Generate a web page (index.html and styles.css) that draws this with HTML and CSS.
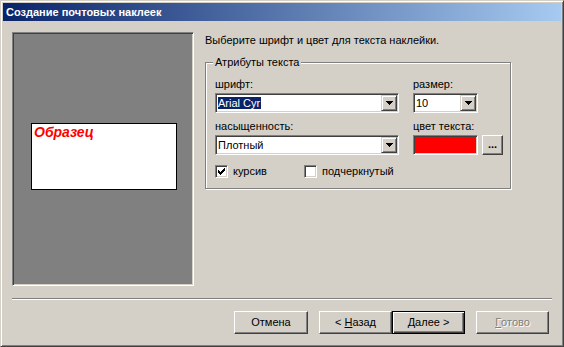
FILE: index.html
```html
<!DOCTYPE html>
<html lang="ru">
  <head>
    <meta charset="UTF-8" />
    <title>Создание почтовых наклеек</title>
    <link rel="stylesheet" href="styles.css">
  </head>
  <body>
    <div class="window">
      <div class="titlebar">Создание почтовых наклеек</div>

      <div class="main">
        <div class="preview">
          <div class="card"><span class="sample">Образец</span></div>
        </div>

        <div class="pane">
          <p class="intro">Выберите шрифт и цвет для текста наклейки.</p>

          <div class="group">
            <span class="legend">Атрибуты текста</span>

            <div class="fields">
              <div class="field">
                <label>шрифт:</label>
                <div class="combo">
                  <span class="value"><span class="selected">Arial Cyr</span></span>
                  <span class="drop"><svg width="7" height="4" viewBox="0 0 7 4"><path d="M0 0h7v1H0zM1 1h5v1H1zM2 2h3v1H2zM3 3h1v1H3z" fill="#000"/></svg></span>
                </div>
              </div>
              <div class="field">
                <label>размер:</label>
                <div class="combo small">
                  <span class="value">10</span>
                  <span class="drop"><svg width="7" height="4" viewBox="0 0 7 4"><path d="M0 0h7v1H0zM1 1h5v1H1zM2 2h3v1H2zM3 3h1v1H3z" fill="#000"/></svg></span>
                </div>
              </div>
              <div class="field">
                <label>насыщенность:</label>
                <div class="combo">
                  <span class="value">Плотный</span>
                  <span class="drop"><svg width="7" height="4" viewBox="0 0 7 4"><path d="M0 0h7v1H0zM1 1h5v1H1zM2 2h3v1H2zM3 3h1v1H3z" fill="#000"/></svg></span>
                </div>
              </div>
              <div class="field">
                <label>цвет текста:</label>
                <div class="color-row">
                  <span class="swatch"></span>
                  <span class="more">...</span>
                </div>
              </div>
            </div>

            <div class="checks">
              <div class="check first">
                <span class="box"><svg width="7" height="7" viewBox="0 0 7 7"><path d="M6 0h1v3H6zM5 1h1v3H5zM4 2h1v3H4zM3 3h1v3H3zM2 4h1v3H2zM1 3h1v3H1zM0 2h1v3H0z" fill="#000"/></svg></span>
                <span>курсив</span>
              </div>
              <div class="check">
                <span class="box"></span>
                <span>подчеркнутый</span>
              </div>
            </div>
          </div>
        </div>
      </div>

      <div class="separator"></div>

      <div class="buttons">
        <div class="btn cancel">Отмена</div>
        <div class="btn back">&lt; <u>Н</u>азад</div>
        <div class="btn default"><u>Д</u>алее &gt;</div>
        <div class="btn disabled finish"><u>Г</u>отово</div>
      </div>
    </div>
  </body>
</html>
```

FILE: styles.css
```css
body {
  margin: 0;
  background: #d4d0c8;
}

.window {
  width: 564px;
  height: 347px;
  box-sizing: border-box;
  background: #d4d0c8;
  border: 1px solid;
  border-color: #d4d0c8 #404040 #404040 #d4d0c8;
  box-shadow: inset 1px 1px #fff, inset -1px -1px #808080;
  padding: 2px;
  font: 11px "Liberation Sans", Arial, sans-serif;
  color: #000;
}

.titlebar {
  height: 18px;
  line-height: 18px;
  padding-left: 3px;
  background: linear-gradient(to right, #0a246a, #a6caf0);
  color: #fff;
  font-weight: bold;
}

.main {
  display: flex;
  align-items: flex-start;
  padding: 11px 0 0 9px;
}

.preview {
  width: 182px;
  height: 254px;
  box-sizing: border-box;
  background: #808080;
  border: 1px solid;
  border-color: #808080 #fff #fff #808080;
  box-shadow: inset 1px 1px #404040, inset -1px -1px #d4d0c8;
  padding: 90px 0 0 18px;
}

.card {
  width: 146px;
  height: 67px;
  box-sizing: border-box;
  background: #fff;
  border: 1px solid #000;
  padding-left: 2px;
}

.sample {
  color: #ff0000;
  font: italic bold 14px/16px "Liberation Sans", Arial, sans-serif;
}

.pane {
  margin-left: 11px;
}

.intro {
  margin: 2px 0 0;
  line-height: 13px;
}

.group {
  position: relative;
  margin-top: 15px;
  width: 306px;
  height: 127px;
  box-sizing: border-box;
  border: 1px solid #808080;
  box-shadow: 1px 1px #fff, inset 1px 1px #fff;
  padding: 15px 0 0 9px;
}

.legend {
  position: absolute;
  top: -7px;
  left: 7px;
  padding: 0 2px;
  line-height: 13px;
  background: #d4d0c8;
}

.fields {
  display: grid;
  grid-template-columns: 184px 90px;
  column-gap: 14px;
  row-gap: 7px;
}

.field label {
  display: block;
  line-height: 13px;
  margin-bottom: 2px;
}

.combo {
  display: flex;
  align-items: center;
  height: 20px;
  box-sizing: border-box;
  background: #fff;
  border: 1px solid;
  border-color: #808080 #fff #fff #808080;
  box-shadow: inset 1px 1px #404040, inset -1px -1px #d4d0c8;
  padding: 1px;
}

.combo.small {
  width: 65px;
}

.combo .value {
  flex: 1;
  padding-left: 1px;
  line-height: 14px;
}

.selected {
  background: #0a246a;
  color: #fff;
  padding: 0 1px 0 0;
}

.drop {
  width: 16px;
  height: 16px;
  box-sizing: border-box;
  display: flex;
  align-items: center;
  justify-content: center;
  background: #d4d0c8;
  border: 1px solid;
  border-color: #d4d0c8 #404040 #404040 #d4d0c8;
  box-shadow: inset 1px 1px #fff, inset -1px -1px #808080;
}

.color-row {
  display: flex;
  gap: 4px;
}

.swatch {
  width: 65px;
  height: 20px;
  box-sizing: border-box;
  background: #ff0000;
  border: 1px solid;
  border-color: #808080 #fff #fff #808080;
  box-shadow: inset 1px 1px #404040, inset -1px -1px #d4d0c8;
}

.more {
  width: 21px;
  height: 20px;
  box-sizing: border-box;
  display: flex;
  align-items: center;
  justify-content: center;
  font-weight: bold;
  line-height: 10px;
  padding-bottom: 3px;
  background: #d4d0c8;
  border: 1px solid;
  border-color: #fff #404040 #404040 #fff;
  box-shadow: inset -1px -1px #808080;
}

.checks {
  display: flex;
  margin-top: 10px;
  line-height: 13px;
}

.check {
  display: flex;
  align-items: center;
  gap: 5px;
}

.check.first {
  width: 89px;
}

.box {
  width: 13px;
  height: 13px;
  box-sizing: border-box;
  display: flex;
  align-items: center;
  justify-content: center;
  background: #fff;
  border: 1px solid;
  border-color: #808080 #fff #fff #808080;
  box-shadow: inset 1px 1px #404040, inset -1px -1px #d4d0c8;
}

.separator {
  margin: 12px 0 0 9px;
  width: 540px;
  height: 1px;
  background: #808080;
  border-bottom: 1px solid #fff;
}

.buttons {
  display: flex;
  justify-content: flex-end;
  padding: 11px 12px 0 0;
}

.btn {
  width: 73px;
  height: 23px;
  box-sizing: border-box;
  display: flex;
  align-items: center;
  justify-content: center;
  line-height: 13px;
  background: #d4d0c8;
  border: 1px solid;
  border-color: #fff #404040 #404040 #fff;
  box-shadow: inset -1px -1px #808080;
  white-space: pre;
}

.btn.cancel {
  width: 74px;
}

.btn.back,
.btn.finish {
  margin-left: 11px;
}

.btn.default {
  border-color: #000;
  box-shadow: inset 1px 1px #fff, inset -1px -1px #404040, inset -2px -2px #808080;
}

.btn.disabled {
  color: #808080;
  text-shadow: 1px 1px #fff;
}
```
